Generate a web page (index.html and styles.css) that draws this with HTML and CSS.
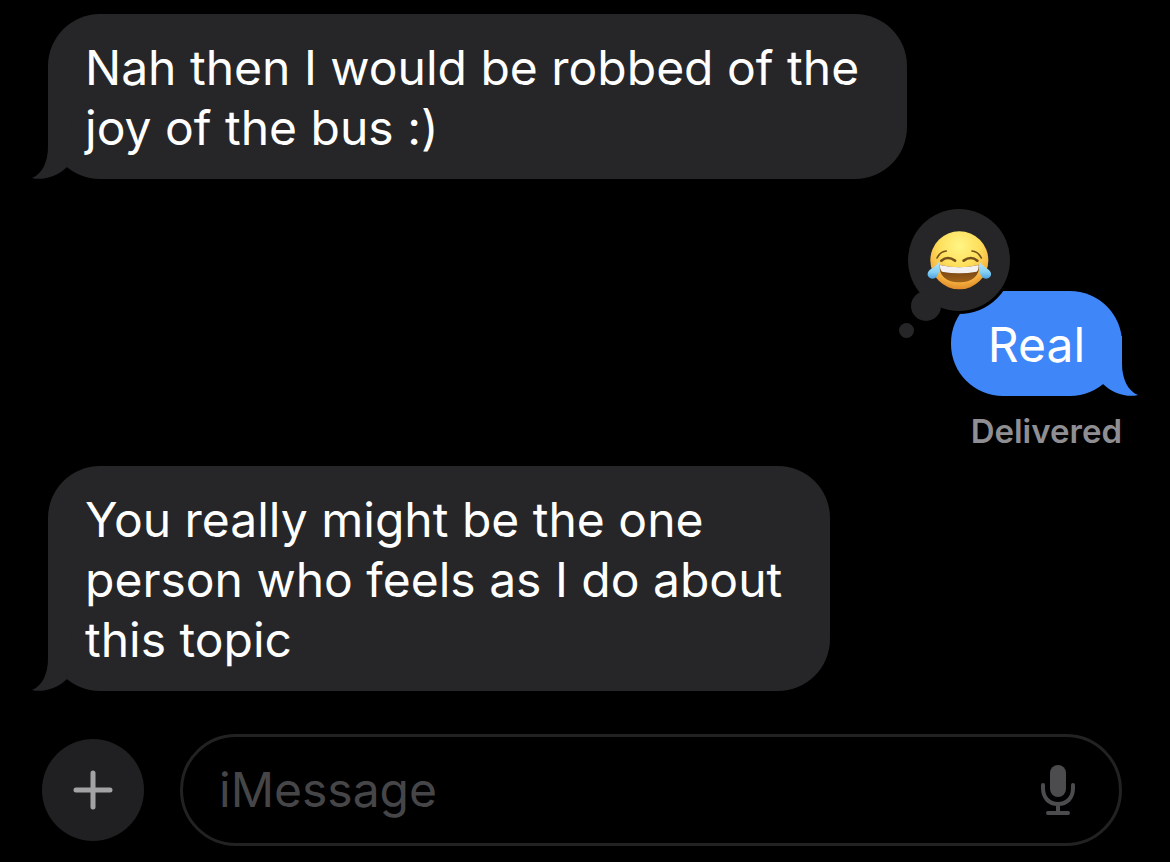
FILE: index.html
```html
<!DOCTYPE html>
<html lang="en">
<head>
    <meta charset="UTF-8">
    <meta name="viewport" content="width=device-width, initial-scale=1.0">
    <title>Messages</title>
    <link rel="stylesheet" href="styles.css">
</head>
<body>
    <main class="chat">
        <div class="message received">
            <p class="bubble">
                Nah then I would be robbed of the<br>joy of the bus :)
                <svg class="tail" width="40" height="60" viewBox="0 0 40 60" aria-hidden="true">
                    <path d="M16 0V28C16 43 10 55 0 59C11 62 26 57 35 48L40 0Z"/>
                </svg>
            </p>
        </div>

        <div class="message sent">
            <p class="bubble">
                Real
                <svg class="tail" width="40" height="60" viewBox="0 0 40 60" aria-hidden="true">
                    <path d="M24 0V28C24 43 30 55 40 59C29 62 14 57 5 48L0 0Z"/>
                </svg>
                <svg class="reaction" width="118" height="136" viewBox="0 0 118 136" role="img" aria-label="Laughing reaction">
                    <defs>
                        <radialGradient id="face" cx="0.5" cy="0.25" r="0.78">
                            <stop offset="0" stop-color="#fff585"/>
                            <stop offset="0.45" stop-color="#fedf5c"/>
                            <stop offset="0.8" stop-color="#f5b03f"/>
                            <stop offset="1" stop-color="#d98325"/>
                        </radialGradient>
                        <linearGradient id="mouth" x1="0" y1="0" x2="0" y2="1">
                            <stop offset="0" stop-color="#6b3a10"/>
                            <stop offset="1" stop-color="#9c611b"/>
                        </linearGradient>
                        <linearGradient id="tear" x1="0" y1="0" x2="0" y2="1">
                            <stop offset="0" stop-color="#b5e6fa"/>
                            <stop offset="0.6" stop-color="#86d0f4"/>
                            <stop offset="1" stop-color="#4ba2e0"/>
                        </linearGradient>
                    </defs>
                    <circle class="ring" cx="64" cy="54" r="54"/>
                    <circle class="cloud" cx="64" cy="54" r="51"/>
                    <circle class="cloud" cx="31" cy="100" r="15"/>
                    <circle class="cloud" cx="11.5" cy="124.5" r="7.5"/>
                    <svg x="19" y="9" width="90" height="90" viewBox="0 0 270 270">
                        <circle cx="136" cy="136" r="87" fill="url(#face)"/>
                        <g fill="none" stroke="#76501a" stroke-linecap="round">
                            <path stroke-width="5" d="M69 129Q78 110 97 108M202 129Q193 110 174 108"/>
                            <path stroke-width="8" d="M82 137Q101 121 123 137M149 137Q171 121 190 137"/>
                        </g>
                        <path d="M77 149Q136 164 195 149C198 182 173 202 136 202S74 182 77 149Z" fill="url(#mouth)"/>
                        <path d="M78 150Q136 164 194 150Q195 164 188 170Q136 179 84 170Q77 164 78 150Z" fill="#f2f1ef"/>
                        <path d="M75 141C80 161 75 191 56 191C44 191 38 181 42 172C47 160 65 157 75 141Z" fill="url(#tear)"/>
                        <path d="M197 141C192 161 197 191 216 191C228 191 234 181 230 172C225 160 207 157 197 141Z" fill="url(#tear)"/>
                    </svg>
                </svg>
            </p>
            <span class="status">Delivered</span>
        </div>

        <div class="message received">
            <p class="bubble">
                You really might be the one<br>person who feels as I do about<br>this topic
                <svg class="tail" width="40" height="60" viewBox="0 0 40 60" aria-hidden="true">
                    <path d="M16 0V28C16 43 10 55 0 59C11 62 26 57 35 48L40 0Z"/>
                </svg>
            </p>
        </div>
    </main>

    <form class="composer">
        <button class="add" type="button" aria-label="Add attachment">
            <svg width="40" height="40" viewBox="0 0 40 40" aria-hidden="true">
                <path d="M20 3V37M3 20H37"/>
            </svg>
        </button>
        <div class="field">
            <input type="text" placeholder="iMessage" aria-label="iMessage">
            <button class="mic" type="button" aria-label="Dictate">
                <svg width="36" height="52" viewBox="0 0 36 52" aria-hidden="true">
                    <rect x="10" y="1" width="16" height="32" rx="8"/>
                    <path d="M3 21V24C3 34 9 40 18 40S33 34 33 24V21M18 40V49M8 49H28"/>
                </svg>
            </button>
        </div>
    </form>
</body>
</html>
```

FILE: styles.css
```css
* {
    box-sizing: border-box;
}
body {
    margin: 0;
    background-color: #000;
    color: #fff;
    font-family: Inter, "Liberation Sans", sans-serif;
    font-size: 48px;
    line-height: 60px;
}
.chat {
    display: flex;
    flex-direction: column;
    padding: 14px 48px 0;
}
.message {
    display: flex;
    flex-direction: column;
}
.received {
    align-items: flex-start;
}
.sent {
    align-items: flex-end;
    margin-top: 112px;
}
.bubble {
    position: relative;
    margin: 0;
    padding: 24px 37px 21px;
    border-radius: 52px;
}
.received .bubble {
    padding-right: 48px;
    background-color: #262628;
}
.sent .bubble {
    background-color: #3f86f8;
}
.tail {
    position: absolute;
    bottom: 0;
}
.received .tail {
    left: -16px;
    fill: #262628;
}
.sent .tail {
    right: -16px;
    fill: #3f86f8;
}
.reaction {
    position: absolute;
    top: -85px;
    left: -56px;
}
.ring {
    fill: #000;
}
.cloud {
    fill: #262628;
}
.status {
    padding: 15px 0;
    color: #8e8e93;
    font-size: 33px;
    font-weight: 600;
    line-height: 40px;
}
.composer {
    display: flex;
    align-items: center;
    gap: 36px;
    padding: 43px 48px 17px 42px;
}
button {
    display: flex;
    align-items: center;
    justify-content: center;
    padding: 0;
    border: none;
    background: none;
    cursor: pointer;
}
.add {
    flex: none;
    width: 102px;
    height: 102px;
    border-radius: 50%;
    background-color: #202022;
}
.add svg {
    fill: none;
    stroke: #a3a3a5;
    stroke-width: 5;
    stroke-linecap: round;
}
.field {
    display: flex;
    flex: 1;
    align-items: center;
    min-width: 0;
    height: 112px;
    padding: 0 43px 0 36px;
    border: 3px solid #222223;
    border-radius: 56px;
}
input {
    flex: 1;
    min-width: 0;
    padding: 0;
    border: none;
    outline: none;
    background: none;
    color: #fff;
    font: inherit;
}
input::placeholder {
    color: #464648;
    opacity: 1;
}
.mic rect {
    fill: #4c4c4e;
}
.mic path {
    fill: none;
    stroke: #4c4c4e;
    stroke-width: 4;
    stroke-linecap: round;
}
```
